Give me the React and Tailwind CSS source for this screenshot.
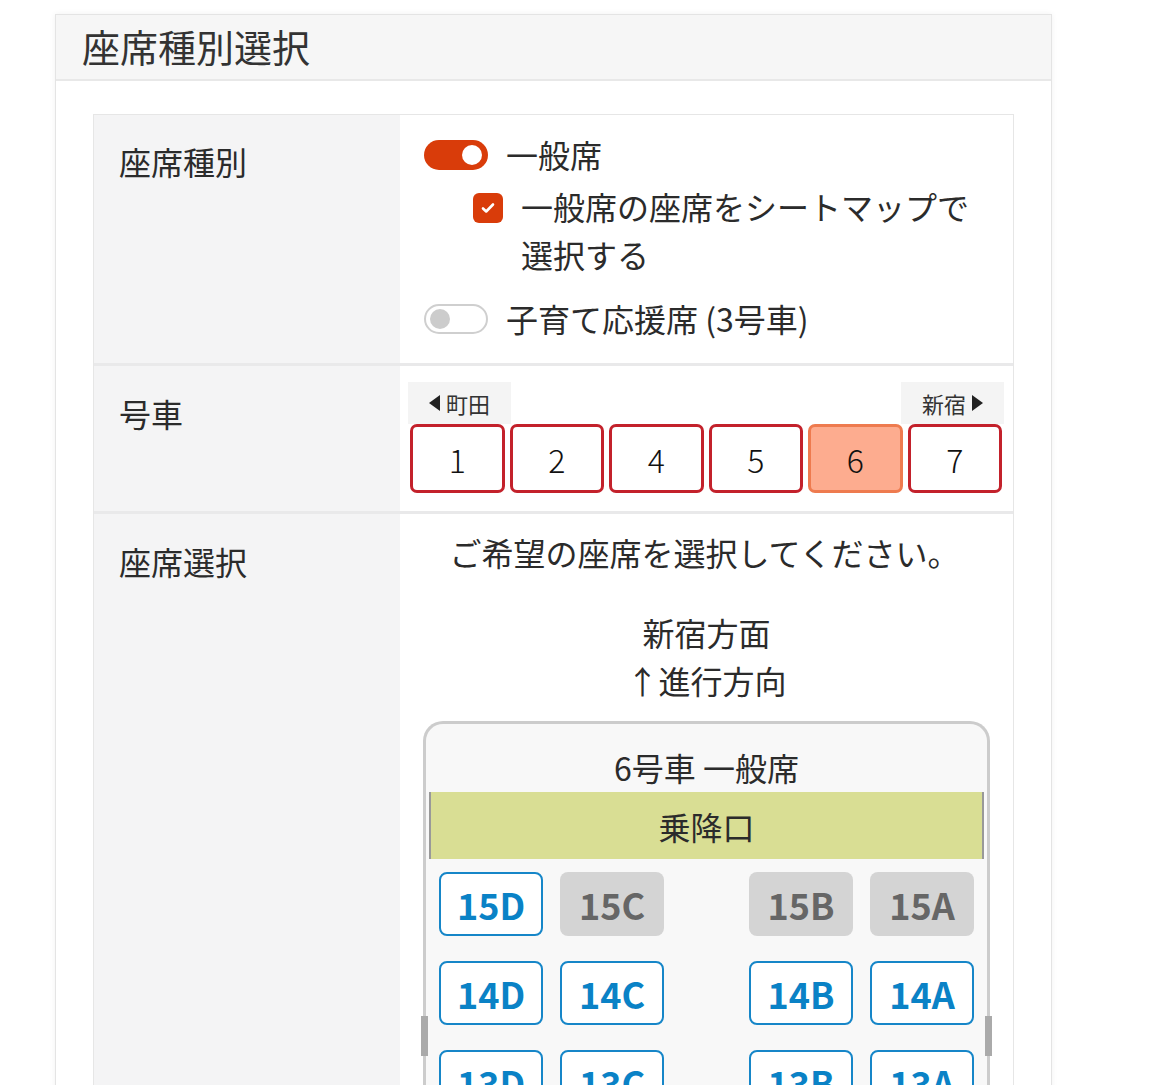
const font = { fontFamily: '"Noto Sans CJK JP", "Noto Sans", sans-serif' };

const Toggle = ({ on }) =>
  on ? (
    <div className="w-[64px] h-[30px] rounded-full bg-[#d93c0a] flex items-center justify-end pr-[6px]">
      <div className="w-[20px] h-[20px] rounded-full bg-white" />
    </div>
  ) : (
    <div className="w-[64px] h-[30px] rounded-full border-2 border-[#cfcfcf] bg-white flex items-center pl-[4px]">
      <div className="w-[20px] h-[20px] rounded-full bg-[#cccccc]" />
    </div>
  );

const Seat = ({ id, disabled }) =>
  disabled ? (
    <div className="w-[104px] h-[64px] rounded-[8px] bg-[#d4d4d4] text-[#666] flex items-center justify-center text-[36px] font-semibold leading-none">
      {id}
    </div>
  ) : (
    <div className="w-[104px] h-[64px] rounded-[8px] border-2 border-[#1686c8] bg-white text-[#0a82c6] flex items-center justify-center text-[36px] font-semibold leading-none">
      {id}
    </div>
  );

const rows = [
  { n: 15, off: ['C', 'B', 'A'] },
  { n: 14, off: [] },
  { n: 13, off: [] },
];

export default function App() {
  return (
    <div className="h-[1085px] overflow-hidden bg-white text-[#2b2b2b]" style={font}>
      <div className="ml-[55px] mt-[14px] w-[997px] border border-[#e4e4e4] shadow-[0_0_6px_rgba(0,0,0,0.06)]">
        <div className="h-[66px] bg-[#f6f6f6] border-b-2 border-[#e8e8e8] pl-[26px] flex items-center">
          <h1 className="text-[38px] leading-none text-[#333] -mt-[2px]">座席種別選択</h1>
        </div>
        <div className="px-[37px] pt-[33px] bg-white">
          <div className="border border-[#e6e6e6]">
            {/* row 1 */}
            <div className="flex border-b-[3px] border-[#e9e9ea]">
              <div className="w-[306px] bg-[#f4f4f5] pl-[25px] pt-[25px] text-[32px] leading-[42px]">座席種別</div>
              <div className="flex-1 pl-[24px] pt-[25px] pb-[29px] text-[32px]">
                <div className="flex items-center gap-[18px] h-[30px]">
                  <Toggle on />
                  <span className="leading-none -mt-[3px]">一般席</span>
                </div>
                <div className="flex mt-[12px] pl-[49px]">
                  <div className="w-[30px] h-[30px] mt-[11px] rounded-[6px] bg-[#d93c0a] flex items-center justify-center shrink-0">
                    <svg width="16" height="16" viewBox="0 0 16 16">
                      <path d="M3 8.5l3.2 3L13 4.5" fill="none" stroke="white" strokeWidth="2.6" strokeLinecap="round" strokeLinejoin="round" />
                    </svg>
                  </div>
                  <div className="ml-[18px] leading-[48px]">
                    一般席の座席をシートマップで
                    <br />
                    選択する
                  </div>
                </div>
                <div className="flex items-center gap-[18px] h-[30px] mt-[26px]">
                  <Toggle />
                  <span className="leading-none -mt-[3px]">子育て応援席 (3号車)</span>
                </div>
              </div>
            </div>
            {/* row 2 */}
            <div className="flex border-b-[3px] border-[#e9e9ea]">
              <div className="w-[306px] bg-[#f4f4f5] pl-[25px] pt-[26px] text-[32px] leading-[42px]">号車</div>
              <div className="flex-1 pl-[8px] pr-[9px] pt-[16px] pb-[18px]">
                <div className="flex justify-between">
                  <div className="h-[42px] w-[103px] bg-[#f4f4f4] flex items-center justify-center gap-[6px] text-[22px] text-[#333]">
                    <svg width="11" height="16" viewBox="0 0 11 16"><path d="M11 0v16L0 8z" fill="#222" /></svg>
                    町田
                  </div>
                  <div className="h-[42px] w-[103px] bg-[#f4f4f4] flex items-center justify-center gap-[6px] text-[22px] text-[#333]">
                    新宿
                    <svg width="11" height="16" viewBox="0 0 11 16"><path d="M0 0v16L11 8z" fill="#222" /></svg>
                  </div>
                </div>
                <div className="grid grid-cols-6 gap-[5px] px-[2px]">
                  {['1', '2', '4', '5', '6', '7'].map((n) => (
                    <div
                      key={n}
                      className={
                        n === '6'
                          ? 'h-[69px] rounded-[7px] border-[3px] border-[#ee7b4f] bg-[#fdac8f] flex items-center justify-center text-[32px] font-light text-[#111]'
                          : 'h-[69px] rounded-[7px] border-[3px] border-[#c3212b] bg-white flex items-center justify-center text-[32px] font-light text-[#111]'
                      }
                    >
                      {n}
                    </div>
                  ))}
                </div>
              </div>
            </div>
            {/* row 3 */}
            <div className="flex">
              <div className="w-[306px] bg-[#f4f4f5] pl-[25px] pt-[26px] text-[32px] leading-[42px]">座席選択</div>
              <div className="flex-1 pt-[17px] text-[32px]">
                <p className="text-center leading-[42px] pr-[4px]">ご希望の座席を選択してください。</p>
                <div className="mt-[35px] text-center leading-[48px]">
                  新宿方面
                  <br />
                  ↑進行方向
                </div>
                <div className="relative mt-[17px] ml-[23px] w-[567px] rounded-t-[20px] border-x-[3px] border-t-[3px] border-[#cccccc] bg-[#f8f8f8] pb-[40px]">
                  <div className="h-[68px] flex items-end justify-center pb-[4px] text-[32px] leading-[42px]">6号車 一般席</div>
                  <div className="mx-[3px] h-[67px] bg-[#d9de94] border-x-2 border-[#999] flex items-center justify-center text-[32px]">
                    乗降口
                  </div>
                  <div className="flex flex-col gap-[25px] mt-[13px] pl-[13px] pr-[13px]">
                    {rows.map((r) => (
                      <div key={r.n} className="flex justify-between">
                        <div className="flex gap-[17px]">
                          <Seat id={`${r.n}D`} disabled={r.off.includes('D')} />
                          <Seat id={`${r.n}C`} disabled={r.off.includes('C')} />
                        </div>
                        <div className="flex gap-[17px]">
                          <Seat id={`${r.n}B`} disabled={r.off.includes('B')} />
                          <Seat id={`${r.n}A`} disabled={r.off.includes('A')} />
                        </div>
                      </div>
                    ))}
                  </div>
                  <div className="absolute left-[-5px] top-[292px] w-[7px] h-[40px] bg-[#aaaaaa]" />
                  <div className="absolute right-[-5px] top-[292px] w-[7px] h-[40px] bg-[#aaaaaa]" />
                </div>
              </div>
            </div>
          </div>
        </div>
      </div>
    </div>
  );
}
